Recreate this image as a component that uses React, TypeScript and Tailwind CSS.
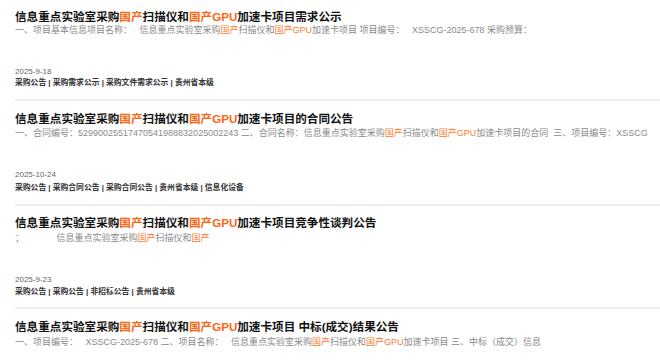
import React from "react";

type Seg = string | { o: string };

type Item = {
  title: Seg[];
  desc: Seg[];
  date: string;
  tags: string[];
  pt: string;
  descMt: string;
  dateMt: string;
  tagsMt: string;
  lineMt: string;
};

const items: Item[] = [
  {
    title: ["信息重点实验室采购", { o: "国产" }, "扫描仪和", { o: "国产GPU" }, "加速卡项目需求公示"],
    desc: [
      "一、项目基本信息项目名称：\u00a0\u00a0\u00a0信息重点实验室采购",
      { o: "国产" },
      "扫描仪和",
      { o: "国产GPU" },
      "加速卡项目 项目编号：\u00a0\u00a0\u00a0XSSCG-2025-678 采购预算：",
    ],
    date: "2025-9-18",
    tags: ["采购公告", "采购需求公示", "采购文件需求公示", "贵州省本级"],
    pt: "pt-[10px]",
    descMt: "mt-0",
    dateMt: "mt-[30px]",
    tagsMt: "mt-0",
    lineMt: "mt-[10px]",
  },
  {
    title: ["信息重点实验室采购", { o: "国产" }, "扫描仪和", { o: "国产GPU" }, "加速卡项目的合同公告"],
    desc: [
      "一、合同编号：52990025517470541988832025002243 二、合同名称：信息重点实验室采购",
      { o: "国产" },
      "扫描仪和",
      { o: "国产GPU" },
      "加速卡项目的合同\u00a0\u00a0三、项目编号：XSSCG",
    ],
    date: "2025-10-24",
    tags: ["采购公告", "采购合同公告", "采购合同公告", "贵州省本级", "信息化设备"],
    pt: "pt-[11px]",
    descMt: "mt-[1px]",
    dateMt: "mt-[30px]",
    tagsMt: "mt-[2px]",
    lineMt: "mt-[10px]",
  },
  {
    title: ["信息重点实验室采购", { o: "国产" }, "扫描仪和", { o: "国产GPU" }, "加速卡项目竞争性谈判公告"],
    desc: [
      "；\u00a0\u00a0\u00a0\u00a0\u00a0\u00a0\u00a0\u00a0\u00a0\u00a0\u00a0\u00a0\u00a0信息重点实验室采购",
      { o: "国产" },
      "扫描仪和",
      { o: "国产" },
    ],
    date: "2025-9-23",
    tags: ["采购公告", "采购公告", "非招标公告", "贵州省本级"],
    pt: "pt-[10px]",
    descMt: "mt-[2px]",
    dateMt: "mt-[30px]",
    tagsMt: "mt-[1px]",
    lineMt: "mt-[9px]",
  },
  {
    title: ["信息重点实验室采购", { o: "国产" }, "扫描仪和", { o: "国产GPU" }, "加速卡项目 中标(成交)结果公告"],
    desc: [
      "一、项目编号：\u00a0\u00a0\u00a0XSSCG-2025-678 二、项目名称：\u00a0\u00a0\u00a0信息重点实验室采购",
      { o: "国产" },
      "扫描仪和",
      { o: "国产GPU" },
      "加速卡项目 三、中标（成交）信息",
    ],
    date: "",
    tags: [],
    pt: "pt-[11px]",
    descMt: "mt-[2px]",
    dateMt: "mt-0",
    tagsMt: "mt-0",
    lineMt: "mt-0",
  },
];

function Segs({ segs, orange }: { segs: Seg[]; orange: string }) {
  return (
    <>
      {segs.map((s, i) =>
        typeof s === "string" ? (
          <span key={i}>{s}</span>
        ) : (
          <span key={i} className={orange}>
            {s.o}
          </span>
        )
      )}
    </>
  );
}

export default function App() {
  return (
    <div
      className="w-[660px] h-[361px] overflow-hidden bg-white"
      style={{ fontFamily: '"Liberation Sans", Arial, "Noto Sans CJK SC", sans-serif' }}
    >
      {items.map((it, idx) => (
        <div key={idx} className={it.pt}>
          <div className="pl-[15px]">
            <div className="text-[11.6px] leading-[14px] font-bold text-[#111] whitespace-nowrap">
              <Segs segs={it.title} orange="text-[#ff6612]" />
            </div>
            <div className={`${it.descMt} text-[9px] leading-[12px] text-[#8a8a8a] whitespace-nowrap`}>
              <Segs segs={it.desc} orange="text-[#ff7a2e]" />
            </div>
            {it.date && (
              <>
                <div className={`${it.dateMt} text-[8px] leading-[11px] text-[#666]`}>{it.date}</div>
                <div className={`${it.tagsMt} text-[7.8px] leading-[12px] font-bold text-[#333] whitespace-nowrap`}>
                  {it.tags.join(" | ")}
                </div>
              </>
            )}
          </div>
          {it.date && <div className={`${it.lineMt} ml-[15px] h-[2px] bg-[#ececec]`} />}
        </div>
      ))}
    </div>
  );
}
